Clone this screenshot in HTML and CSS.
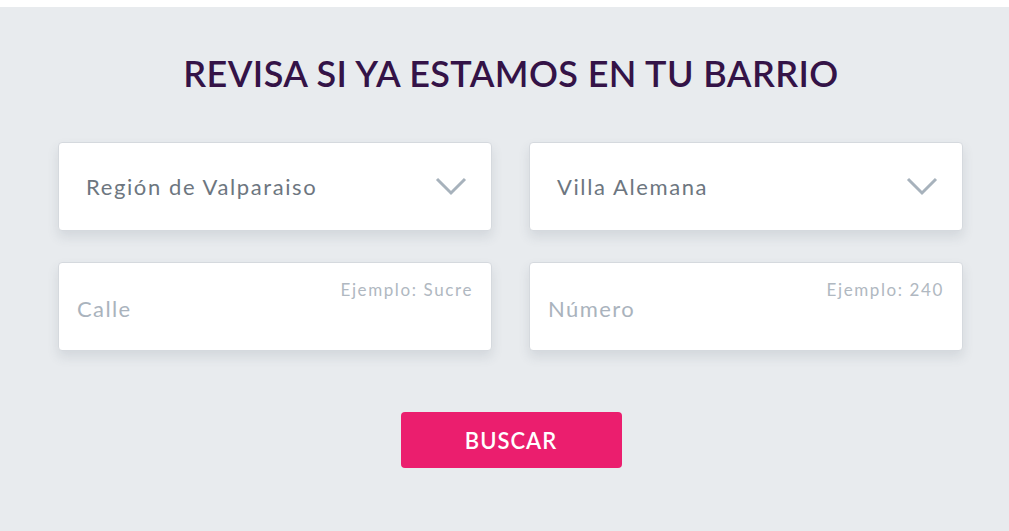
FILE: index.html
```html
<!DOCTYPE html>
<html lang="es">
<head>
<meta charset="utf-8">
<link rel="stylesheet" href="styles.css">
</head>
<body>
<div class="topbar"></div>
<section class="finder">
  <div class="container">
    <h1 class="title">REVISA SI YA ESTAMOS EN TU BARRIO</h1>
    <div class="grid">
      <div class="field select">
        <span class="value">Región de Valparaiso</span>
        <svg class="chev" width="32" height="20" viewBox="0 0 32 20"><path d="M2 2 L16 16 L30 2" fill="none" stroke="#a7b2bc" stroke-width="3"/></svg>
      </div>
      <div class="field select">
        <span class="value">Villa Alemana</span>
        <svg class="chev" width="32" height="20" viewBox="0 0 32 20"><path d="M2 2 L16 16 L30 2" fill="none" stroke="#a7b2bc" stroke-width="3"/></svg>
      </div>
      <div class="field input">
        <span class="placeholder">Calle</span>
        <span class="hint">Ejemplo: Sucre</span>
      </div>
      <div class="field input">
        <span class="placeholder">Número</span>
        <span class="hint">Ejemplo: 240</span>
      </div>
    </div>
    <div class="actions">
      <button class="btn">BUSCAR</button>
    </div>
  </div>
</section>
</body>
</html>
```
FILE: styles.css
```css
html, body {
  margin: 0;
  padding: 0;
}
body {
  background: #e8ebee;
  font-family: Lato, "Noto Sans", sans-serif;
}
.topbar {
  height: 7px;
  background: #ffffff;
}
.finder {
  background: #e8ebee;
  height: 524px;
}
.container {
  width: 906px;
  margin-left: 58px;
  padding-top: 46px;
}
.title {
  margin: 0;
  text-align: center;
  font-size: 36px;
  font-weight: 600;
  color: #341347;
  letter-spacing: 0.4px;
  line-height: 40px;
}
.grid {
  margin-top: 49px;
  display: grid;
  grid-template-columns: 434px 434px;
  column-gap: 37px;
  row-gap: 31px;
}
.field {
  position: relative;
  height: 89px;
  background: #ffffff;
  border: 1px solid #d5d9de;
  border-radius: 4px;
  box-shadow: 0 6px 12px rgba(60, 70, 90, 0.12);
  display: flex;
  align-items: center;
  box-sizing: border-box;
}
.select {
  padding: 0 24px 0 27px;
  justify-content: space-between;
}
.value {
  font-size: 22px;
  letter-spacing: 1.6px;
  color: #6d7680;
}
.chev {
  display: block;
}
.input {
  padding: 0 18px;
}
.placeholder {
  font-size: 22px;
  letter-spacing: 1.4px;
  color: #aab3bd;
  margin-top: 4px;
}
.hint {
  position: absolute;
  right: 18px;
  top: 16px;
  font-size: 17px;
  letter-spacing: 1.6px;
  color: #b0b8c1;
}
.actions {
  display: flex;
  justify-content: center;
  margin-top: 61px;
}
.btn {
  width: 221px;
  height: 56px;
  border: 0;
  border-radius: 4px;
  background: #eb1e6e;
  color: #ffffff;
  font-family: Lato, "Noto Sans", sans-serif;
  font-size: 22px;
  font-weight: 600;
  letter-spacing: 1px;
}
```
